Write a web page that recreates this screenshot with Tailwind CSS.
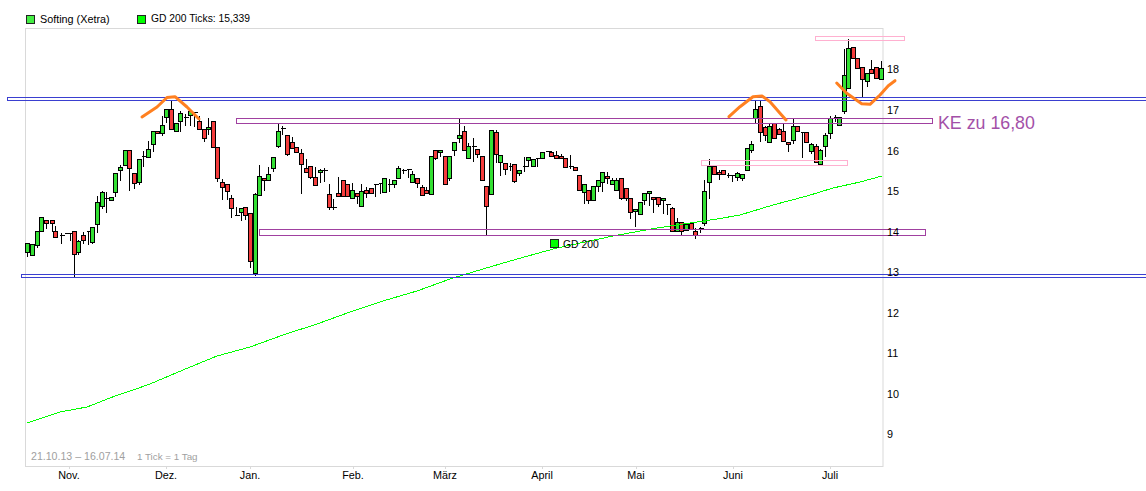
<!DOCTYPE html>
<html lang="de">
<head>
    <meta charset="UTF-8">
    <title>Softing (Xetra)</title>
    <script src="https://cdn.jsdelivr.net/npm/@tailwindcss/browser@4"></script>
</head>
<body class="bg-white overflow-hidden">
    <div class="w-[1146px] h-[491px] font-['Liberation_Sans',Arial,sans-serif] text-[10.8px] text-black">
        <!-- Legend -->
        <div class="h-[28px] flex items-start pt-[14px] pl-[26px] leading-[10px]">
            <div class="flex items-center gap-[5px] w-[111px]">
                <span class="w-[9px] h-[9px] border border-[#222] bg-[#44ee44]"></span>
                <span>Softing (Xetra)</span>
            </div>
            <div class="flex items-center gap-[5px]">
                <span class="w-[9px] h-[9px] border border-[#222] bg-[#00ff00]"></span>
                <span class="text-[10.3px]">GD 200 Ticks: 15,339</span>
            </div>
        </div>

        <!-- Chart -->
        <svg id="chart" class="block" width="1146" height="463" viewBox="0 28 1146 463" xmlns="http://www.w3.org/2000/svg">
            <rect x="25.5" y="28.5" width="857.5" height="438" fill="#fff" stroke="#d9d9d9"/>
            <g id="ticks" stroke="#d9d9d9"></g>
            <g id="candles" shape-rendering="crispEdges"></g>
            <polyline id="gd200" fill="none" stroke="#00ff00" shape-rendering="crispEdges" points="27,423 60,412 87,407 115,396 133,390 150,384 183,370 217,356 250,347 283,335 317,324 350,312 383,301 417,291 450,279 483,269 517,259 557,248 613,236 657,228 690,223 717,219 740,215 773,205 807,196 833,188 860,182 882,176"/>

            <!-- drawn trend boxes -->
            <g fill="none" shape-rendering="crispEdges">
                <rect x="7.5" y="97.5" width="1145" height="3" stroke="#3a3fd0"/>
                <rect x="21.5" y="274.5" width="1130" height="3" stroke="#3a3fd0"/>
                <rect x="236.5" y="118.5" width="696" height="5" stroke="#a040a0"/>
                <rect x="259.5" y="229.5" width="666" height="6" stroke="#a040a0"/>
                <rect x="815.5" y="36.5" width="89" height="4" stroke="#ffb0d0"/>
                <rect x="701.5" y="160.5" width="146" height="5" stroke="#ffb0d0"/>
            </g>

            <!-- hand drawn curves -->
            <g fill="none" stroke="#ff8020" stroke-width="3" stroke-linecap="round" stroke-linejoin="round">
                <polyline points="142,117 157,107 167,97.5 175,96.7 187,107 199,119"/>
                <polyline points="729,116.7 740,106.7 753,96.7 762,96 770,101.7 780,113.3 786,120"/>
                <polyline points="836.7,83 846.7,93.3 861.7,103.7 870,104.3 880,95 888.3,85.7 895,80.7"/>
            </g>

            <rect x="550.5" y="239.5" width="8" height="8" fill="#00ff00" stroke="#222"/>
            <text x="563" y="248" font-size="10.4" class="fill-black">GD 200</text>

            <text x="938" y="129" font-size="17.8" class="fill-[#a350a8]">KE zu 16,80</text>
            <text x="31" y="460" font-size="10.6" class="fill-[#a0a0a0]">21.10.13 – 16.07.14</text>
            <text x="137" y="460" font-size="9.8" class="fill-[#a0a0a0]">1 Tick = 1 Tag</text>

            <g id="yaxis" class="fill-black"></g>
            <g id="xaxis" class="fill-black" text-anchor="middle"></g>
        </svg>
    </div>

    <script>
        const NS = 'http://www.w3.org/2000/svg';

        function el(parent, name, attrs, text) {
            const node = document.createElementNS(NS, name);
            for (const k in attrs) node.setAttribute(k, attrs[k]);
            if (text) node.textContent = text;
            parent.appendChild(node);
        }

        // Candles read off the zoomed crops: [x, colour, top, bottom, high, low]
        // each block is in 3x crop coordinates with its own origin
        const G = 'g', R = 'r', D = 'd';
        const blocks = [
            [0, 160, [
                [82,G,250,275,245,287],[97,G,253,284,253,285],[112,G,214,254,214,260],[124,G,170,214,170,214],
                [139,R,179,190,179,203],[155,R,181,190,181,212],[166,R,212,232,195,232],[182,D,226,226,215,248],
                [197,D,219,219,219,219],[209,D,220,220,220,240],[223,R,214,281,214,350],[235,G,242,275,238,281],
                [250,R,226,239,213,248],[265,D,214,214,214,252],[277,G,202,245,202,250],[292,G,127,193,105,215],
                [307,G,97,139,90,143],[319,D,113,113,92,155],[334,G,112,121,112,121],[346,G,38,97,38,107],
                [361,G,20,31,13,60],[376,G,-29,16,-29,16],[388,R,-29,25,-29,90],[403,R,38,70,38,83],[418,G,-2,67,-2,73],
            ]],
            [0, 0, [
                [430,D,468,468,450,498],[445,G,448,470,420,470],[460,G,392,433,392,452],[472,R,392,400,392,400],
                [487,G,376,400,345,405],[499,G,328,352,328,365],[514,R,328,388,300,388],[529,G,370,394,370,394],
                [541,G,338,364,330,392],[556,D,350,350,340,375],[571,G,334,346,334,375],[583,D,335,335,335,378],
                [598,R,364,388,345,388],[613,R,388,415,388,422],[625,G,380,388,352,403],[640,R,364,440,364,440],
                [652,R,440,535,440,542],[667,R,547,562,535,597],[682,R,553,574,553,597],[694,R,595,625,582,650],
                [709,D,645,645,618,645],[724,G,625,635,625,660],[736,R,622,646,622,657],[751,R,640,784,640,800],
                [766,G,583,820,575,825],[778,G,529,586,493,586],[793,R,535,541,535,570],[805,G,523,541,498,541],
                [820,G,470,505,470,512],[835,G,394,439,365,440],[847,D,385,385,375,403],
            ]],
            [280, 100, [
                [22,R,106,162,106,165],[37,R,127,143,108,143],[49,R,142,157,142,157],[64,R,160,191,145,278],
                [79,R,205,217,175,217],[91,R,199,232,199,234],[106,R,232,254,198,254],[121,G,211,217,205,246],
                [133,D,209,209,202,243],[148,R,283,320,250,326],[160,D,321,321,294,327],[175,R,280,289,229,289],
                [190,R,241,289,241,289],[202,R,253,289,253,289],[217,G,271,295,247,295],[232,R,280,289,280,308],
                [244,G,274,319,250,319],[259,R,271,280,258,290],[274,R,265,280,265,280],[286,D,253,253,253,288],
                [301,D,250,250,250,279],[313,G,235,277,235,277],[328,D,252,252,235,273],[343,G,241,253,241,260],
                [355,G,205,235,196,235],[370,D,211,211,205,218],[385,D,206,206,206,232],[397,G,223,247,211,247],
                [412,R,235,250,235,260],[427,R,262,286,253,286],[439,R,271,280,259,280],[454,G,169,283,169,283],
                [466,R,151,175,151,178],[481,G,151,157,151,167],[496,R,169,253,169,253],[508,G,169,235,169,241],
                [523,G,127,151,127,165],[538,G,106,115,52,127],[553,R,94,151,75,151],[565,G,139,175,127,175],
                [580,D,139,139,112,182],[592,R,148,163,148,171],[607,R,169,241,169,241],[619,R,259,319,259,405],
            ]],
            [490, 120, [
                [4,G,31,223,27,223],[19,R,37,103,27,126],[31,G,105,125,105,165],[46,R,130,148,125,163],
                [61,D,139,139,127,150],[73,R,133,182,133,185],[88,G,151,158,151,165],[103,D,139,139,109,152],
                [115,G,112,121,112,138],[130,G,116,137,116,137],[142,D,115,115,115,137],[157,G,97,115,97,115],
                [172,D,92,92,90,94],[184,R,97,107,90,107],[199,R,106,115,91,115],[214,R,109,115,100,115],
                [226,R,115,142,115,142],[241,D,139,139,103,145],[256,R,142,151,138,151],[268,R,166,211,166,211],
                [283,G,193,217,193,250],[295,R,211,241,211,250],[310,G,199,241,199,241],[325,G,181,199,181,213],
                [337,G,157,187,157,213],[352,R,169,175,153,190],[367,G,181,193,172,193],[379,G,181,211,172,211],
                [394,R,175,233,175,238],[409,R,205,235,205,241],[421,R,235,275,235,293],[436,G,268,274,268,317],
                [451,G,247,281,247,281],[463,G,220,241,220,253],[478,G,214,220,214,255],[490,R,232,238,232,275],
                [505,R,232,253,232,258],[520,G,235,241,235,278],[532,D,251,251,251,281],[547,R,265,334,258,334],
                [562,G,307,334,292,334],[574,R,307,334,307,345],[589,G,313,331,313,331],[604,R,310,328,310,328],
                [616,R,334,346,322,353],[631,D,325,325,318,335],
            ]],
            [690, 80, [
                [43,G,334,430,297,436],[58,G,258,307,235,355],[73,R,258,282,252,282],[88,R,277,283,267,297],
                [100,R,271,283,268,283],[115,D,284,284,276,290],[127,D,286,286,286,302],[142,G,280,292,273,300],
                [157,G,283,295,280,300],[170,G,205,271,205,271],[184,G,193,211,180,215],[196,G,88,113,60,130],
                [211,R,79,157,60,182],[226,R,142,166,135,180],[238,G,139,187,130,187],[253,R,130,175,125,175],
                [268,R,148,163,140,163],[280,R,154,184,130,184],[295,R,187,193,187,212],[310,G,139,181,115,190],
                [322,R,139,154,139,154],[337,D,157,157,157,230],[349,R,157,187,155,187],[364,G,193,214,185,218],
                [379,R,199,247,190,247],[391,G,211,253,205,254],[406,G,166,199,157,228],[421,G,115,160,105,175],
                [436,D,112,112,103,124],[448,G,112,136,112,136],
            ]],
            [800, 25, [
                [133,G,151,259,70,265],[145,G,70,190,40,190],[160,R,67,100,67,100],[172,R,100,130,100,130],
                [187,R,127,163,127,215],[202,G,145,169,145,182],[214,R,133,145,103,145],[229,R,127,160,127,160],
                [244,G,130,163,105,163],
            ]],
        ];

        const candles = document.getElementById('candles');
        const fills = { g: '#33e033', r: '#f43c3c' };
        blocks.forEach(([ox, oy, rows]) => {
            rows.forEach(([x, kind, top, bot, hi, lo]) => {
                const cx = Math.round(ox + x / 3) + 0.5;
                const Y = v => Math.round(oy + v / 3) + 0.5;
                el(candles, 'line', { x1: cx, x2: cx, y1: Y(hi), y2: Y(lo), stroke: '#000' });
                if (kind === D) {
                    el(candles, 'line', { x1: cx - 2, x2: cx + 3, y1: Y(top), y2: Y(top), stroke: '#000' });
                } else {
                    el(candles, 'rect', { x: cx - 2, y: Y(top), width: 4, height: Y(bot) - Y(top), fill: fills[kind], stroke: '#000' });
                }
            });
        });

        // Price axis
        const yaxis = document.getElementById('yaxis');
        [[18,69],[17,110],[16,151],[15,191],[14,232],[13,272],[12,313],[11,353],[10,394],[9,434]].forEach(([v, y]) => {
            el(yaxis, 'text', { x: 887, y: y + 4 }, String(v));
        });

        // Month axis
        const xaxis = document.getElementById('xaxis');
        const ticks = document.getElementById('ticks');
        [['Nov.',69],['Dez.',166],['Jan.',250],['Feb.',353],['März',445],['April',542],['Mai',636],['Juni',733],['Juli',830]].forEach(([m, x]) => {
            el(xaxis, 'text', { x: x, y: 479 }, m);
            el(ticks, 'line', { x1: x + 0.5, x2: x + 0.5, y1: 467, y2: 469 });
        });
    </script>
</body>
</html>
